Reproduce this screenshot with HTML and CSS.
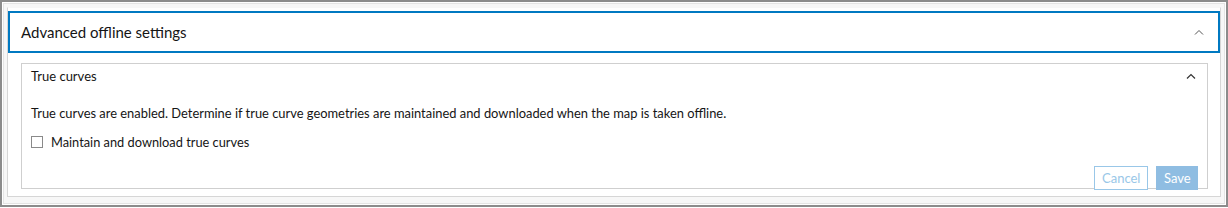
FILE: index.html
```html
<!DOCTYPE html>
<html lang="en">
<head>
    <meta charset="UTF-8">
    <title>Advanced offline settings</title>
    <link rel="stylesheet" href="styles.css">
</head>
<body>
    <div class="frame">
        <div class="shell">
            <div class="panel">
                <div class="panel-header">
                    <span class="panel-title">Advanced offline settings</span>
                    <svg class="chevron" width="10" height="6" viewBox="0 0 10 6"><path d="M1 5.5 L5 1.5 L9 5.5" fill="none" stroke="#555" stroke-width="1"/></svg>
                </div>

                <div class="card">
                    <div class="card-header">
                        <span class="card-title">True curves</span>
                        <svg class="chevron" width="10" height="6" viewBox="0 0 10 6"><path d="M1 5.5 L5 1.5 L9 5.5" fill="none" stroke="#333" stroke-width="1.2"/></svg>
                    </div>
                    <p class="desc">True curves are enabled. Determine if true curve geometries are maintained and downloaded when the map is taken offline.</p>
                    <label class="check-row">
                        <span class="box"></span>
                        <span>Maintain and download true curves</span>
                    </label>
                    <div class="actions">
                        <button class="btn btn-outline" disabled>Cancel</button>
                        <button class="btn btn-fill" disabled>Save</button>
                    </div>
                </div>
            </div>
        </div>
    </div>
</body>
</html>
```

FILE: styles.css
```css
body {
    margin: 0;
    background: #ffffff;
    font-family: Lato, "Noto Sans", sans-serif;
    color: #151515;
}
.frame {
    box-sizing: border-box;
    width: 1228px;
    height: 207px;
    border: 2px solid #8c8c8c;
    background: #ffffff;
    padding: 1px;
}
.shell {
    box-sizing: border-box;
    height: 100%;
    border: 1px solid #e4e4e4;
    background: #f7f7f7;
    padding: 3px 3px 4px 3px;
}
.panel {
    box-sizing: border-box;
    height: 190px;
    border: 1px solid #d6d6d6;
    border-top-color: #f7f7f7;
    background: #ffffff;
    padding: 3px 0 0 0;
}
.panel-header {
    box-sizing: border-box;
    height: 42px;
    border: 2px solid #0079c1;
    display: flex;
    align-items: center;
    justify-content: space-between;
    padding: 0 14px 0 11px;
}
.panel-title {
    font-size: 15px;
}
.chevron {
    display: block;
}
.card {
    box-sizing: border-box;
    height: 126px;
    margin: 10px 12px 0 13px;
    border: 1px solid #cfcfcf;
    padding: 0 9px 0 9px;
}
.card-header {
    height: 24px;
    display: flex;
    align-items: center;
    justify-content: space-between;
    padding-right: 2px;
}
.card-title {
    font-size: 13px;
}
.desc {
    font-size: 12.9px;
    margin: 15px 0 0 0;
    line-height: 20px;
}
.check-row {
    display: flex;
    align-items: center;
    gap: 8px;
    font-size: 12.8px;
    height: 20px;
    margin-top: 9px;
}
.box {
    box-sizing: border-box;
    width: 12px;
    height: 12px;
    border: 1px solid #8a8a8a;
    background: #fff;
}
.actions {
    display: flex;
    justify-content: flex-end;
    gap: 8px;
    margin-top: 14px;
    padding-right: 0;
}
.btn {
    box-sizing: border-box;
    height: 24px;
    font-family: Lato, "Noto Sans", sans-serif;
    font-size: 13px;
    padding: 0 7px;
    border-radius: 0;
}
.btn-outline {
    background: #ffffff;
    border: 1px solid #99c7e8;
    color: #99c7e8;
    width: 54px;
}
.btn-fill {
    background: #8fbde2;
    border: 1px solid #8fbde2;
    color: #ffffff;
    width: 42px;
}
```
